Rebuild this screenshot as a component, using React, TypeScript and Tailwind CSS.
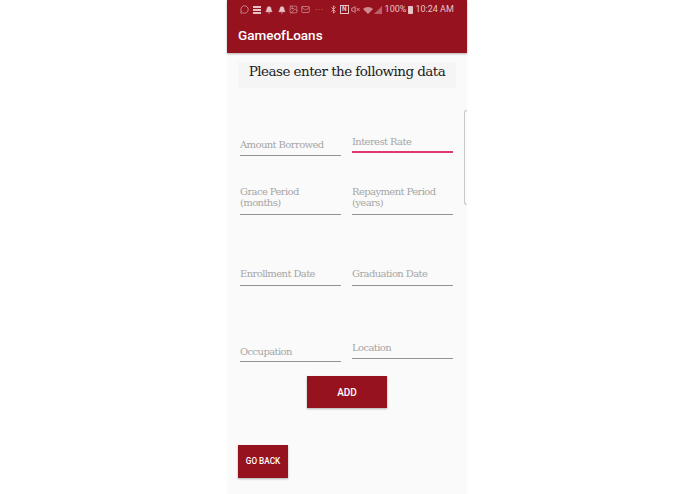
import React from 'react';
import { Bell, Bluetooth, Image, Mail, MessageCircle, VolumeX } from 'lucide-react';

const serif = "font-['DejaVu_Serif','Liberation_Serif',serif]";

const Field: React.FC<{ label: string; focused?: boolean; className?: string; pad?: string }> = ({ label, focused, className, pad }) => (
  <div className={`flex flex-col ${className ?? ''}`}>
    <div className={`${serif} text-[10px] leading-[11px] tracking-[-0.6px] text-[#a6a6a6] ${pad ?? 'pb-[5px]'}`}>{label}</div>
    <div className={focused ? 'h-[2px] bg-[#e0386e]' : 'h-px bg-[#929292]'} />
  </div>
);

const StatusBar = () => (
  <div className="h-[18px] pt-[1px] flex items-center pl-[13px] text-[#e6c3c7] font-['Roboto',sans-serif] text-[9px]">
    <MessageCircle size={9} strokeWidth={1.6} />
    <div className="ml-[4px] w-[8px] h-[8px] flex flex-col justify-between">
      <div className="h-[2px] bg-[#e6c3c7]" />
      <div className="h-[2px] bg-[#e6c3c7]" />
      <div className="h-[2px] bg-[#e6c3c7]" />
    </div>
    <Bell size={8} className="ml-[4px]" fill="currentColor" />
    <Bell size={8} className="ml-[5px]" fill="currentColor" />
    <Image size={9} className="ml-[3px]" strokeWidth={1.4} />
    <Mail size={9} className="ml-[3px]" strokeWidth={1.4} />
    <span className="ml-[5px] w-[10px] tracking-[1px] text-[8px] leading-none opacity-70">···</span>
    <Bluetooth size={9} className="ml-[4px]" strokeWidth={2} />
    <span className="ml-[2px] border border-[#e6c3c7] text-[6.5px] leading-[7px] px-px font-bold">N</span>
    <VolumeX size={9} className="ml-[2px]" strokeWidth={2} />
    <svg width="10" height="8" viewBox="0 0 10 8" className="ml-[3px]">
      <path d="M0 3a7 7 0 0 1 10 0L5 8z" fill="#d08a92" />
    </svg>
    <svg width="8" height="8" viewBox="0 0 8 8" className="ml-px">
      <path d="M0 8L8 0v8z" fill="#bd5f6a" />
    </svg>
    <span className="ml-[3px]">100%</span>
    <div className="ml-[2px] w-[5px] h-[8px] bg-[#e6c3c7] rounded-[1px]" />
    <span className="ml-[2px] whitespace-nowrap">10:24 AM</span>
  </div>
);

export default function App() {
  return (
    <div className="h-[494px] w-[695px] bg-white flex justify-center pr-px overflow-hidden">
      <div className="relative w-[240px] h-full bg-[#fafafa]">
        <header className="h-[53px] bg-[#97121f] text-white shadow-[0_1px_2px_rgba(0,0,0,0.3)]">
          <StatusBar />
          <div className="pl-[11px] pt-[8px] font-['Roboto',sans-serif] text-[13.5px] leading-[18px] font-medium">GameofLoans</div>
        </header>

        <div className="mt-[9px] ml-[11px] w-[218px] h-[26px] bg-[#f5f5f5] flex justify-center">
          <span className={`${serif} text-[13.5px] leading-[18px] tracking-[-0.55px] whitespace-nowrap text-[#1c1c1c]`}>Please enter the following data</span>
        </div>

        <div className="px-[13px] mt-[48px] grid grid-cols-[101px_101px] gap-x-[11px] items-end">
          <Field label="Amount Borrowed" />
          <Field label="Interest Rate" focused className="mb-[3px]" pad="pb-[4px]" />
          <Field label={'Grace Period\n(months)'} className="mt-[30px] whitespace-pre-line" pad="pb-[6px]" />
          <Field label={'Repayment Period\n(years)'} className="mt-[30px] whitespace-pre-line" pad="pb-[6px]" />
          <Field label="Enrollment Date" className="mt-[53px]" pad="pb-[6px]" />
          <Field label="Graduation Date" className="mt-[53px]" pad="pb-[6px]" />
          <Field label="Occupation" className="mt-[60px]" pad="pb-[4px]" />
          <Field label="Location" className="mb-[3px]" />
        </div>

        <div className="flex justify-center mt-[14px]">
          <button className="w-[80px] h-[32px] bg-[#97121f] text-white font-['Roboto',sans-serif] text-[10px] font-medium shadow-[0_1px_2px_rgba(0,0,0,0.3)]">ADD</button>
        </div>
        <button className="block ml-[11px] mt-[37px] w-[50px] h-[33px] bg-[#97121f] text-white font-['Roboto',sans-serif] text-[8.2px] font-medium shadow-[0_1px_2px_rgba(0,0,0,0.3)]">GO BACK</button>

        <div className="absolute right-0 top-[110px] w-[3px] h-[95px] border-l border-y border-[#c8c8c8] rounded-l-[3px]" />
      </div>
    </div>
  );
}
